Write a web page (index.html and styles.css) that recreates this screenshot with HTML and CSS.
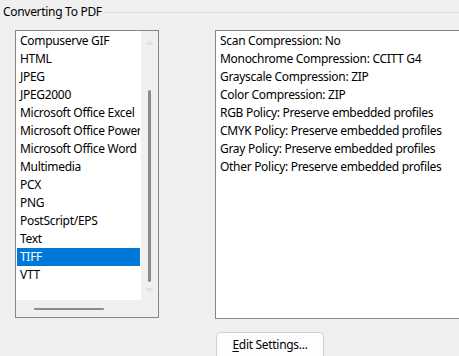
FILE: index.html
```html
<!DOCTYPE html>
<html>
<head>
<meta charset="utf-8">
<link rel="stylesheet" href="styles.css">
</head>
<body>
<div class="group">
  <div class="legend">
    <span class="legend-text">Converting To PDF</span>
    <span class="legend-line"></span>
  </div>
  <div class="content">
    <div class="listbox">
      <div class="lb-main">
        <div class="lb-items">
          <div class="item">Compuserve GIF</div>
          <div class="item">HTML</div>
          <div class="item">JPEG</div>
          <div class="item">JPEG2000</div>
          <div class="item">Microsoft Office Excel</div>
          <div class="item">Microsoft Office PowerPoint</div>
          <div class="item">Microsoft Office Word</div>
          <div class="item">Multimedia</div>
          <div class="item">PCX</div>
          <div class="item">PNG</div>
          <div class="item">PostScript/EPS</div>
          <div class="item">Text</div>
          <div class="item selected">TIFF</div>
          <div class="item">VTT</div>
        </div>
        <div class="vscroll">
          <svg class="arrow up" width="9" height="6" viewBox="0 0 9 6"><path d="M0 6 L4.5 1 L9 6 Z" fill="#e2e2e2"/></svg>
          <div class="vthumb"></div>
          <svg class="arrow down" width="9" height="6" viewBox="0 0 9 6"><path d="M0 0 L4.5 5 L9 0 Z" fill="#e2e2e2"/></svg>
        </div>
      </div>
      <div class="lb-bottom">
        <div class="hscroll"><div class="hthumb"></div></div>
        <div class="corner"></div>
      </div>
    </div>
    <div class="details">
      <div class="line">Scan Compression: No</div>
      <div class="line">Monochrome Compression: CCITT G4</div>
      <div class="line">Grayscale Compression: ZIP</div>
      <div class="line">Color Compression: ZIP</div>
      <div class="line">RGB Policy: Preserve embedded profiles</div>
      <div class="line">CMYK Policy: Preserve embedded profiles</div>
      <div class="line">Gray Policy: Preserve embedded profiles</div>
      <div class="line">Other Policy: Preserve embedded profiles</div>
    </div>
  </div>
  <div class="actions">
    <button class="btn"><u>E</u>dit Settings...</button>
  </div>
</div>
</body>
</html>
```
FILE: styles.css
```css
html, body {
  margin: 0;
  padding: 0;
  background: #f0f0f0;
  width: 459px;
  height: 356px;
  overflow: hidden;
}
body {
  font-family: "Noto Sans", "Open Sans", sans-serif;
  font-size: 12px;
  letter-spacing: -0.3px;
  color: #000;
}
.group {
  padding-top: 3px;
}
.legend {
  display: flex;
  align-items: center;
  height: 17px;
}
.legend-text {
  padding-left: 3px;
  padding-right: 3px;
  white-space: nowrap;
}
.legend-line {
  flex: 1;
  height: 0;
  border-top: 1px solid #dcdcdc;
  margin-top: 1px;
}
.content {
  display: flex;
  margin-top: 10px;
  padding-left: 15px;
  gap: 56px;
}
.listbox {
  width: 142px;
  height: 286px;
  border: 1px solid #828790;
  display: flex;
  flex-direction: column;
  background: #f0f0f0;
  flex: none;
}
.lb-main {
  display: flex;
  flex: 1;
  min-height: 0;
}
.lb-items {
  width: 124px;
  background: #fff;
  padding: 1px 0 0 1px;
  overflow: hidden;
}
.item {
  height: 18px;
  line-height: 18px;
  padding-left: 3px;
  white-space: nowrap;
  overflow: hidden;
  width: 120px;
}
.item.selected {
  background: #0078d7;
  color: #fff;
}
.vscroll {
  width: 17px;
  background: #f0f0f0;
  display: flex;
  flex-direction: column;
  align-items: center;
}
.arrow {
  display: block;
}
.arrow.up {
  margin-top: 8px;
}
.vthumb {
  width: 3px;
  border-radius: 2px;
  background: #8b8b8b;
  margin-top: 45px;
  height: 192px;
}
.arrow.down {
  margin-top: 6px;
}
.lb-bottom {
  display: flex;
  height: 17px;
  flex: none;
}
.hscroll {
  width: 125px;
  display: flex;
  align-items: center;
  padding-left: 18px;
  box-sizing: border-box;
}
.hthumb {
  width: 70px;
  height: 2px;
  border-radius: 1px;
  background: #8b8b8b;
}
.corner {
  width: 17px;
}
.details {
  flex: 1;
  height: 286px;
  border: 1px solid #828790;
  border-right: none;
  background: #fff;
  padding: 1px 0 0 4px;
}
.line {
  height: 18px;
  line-height: 18px;
  white-space: nowrap;
}
.actions {
  padding-left: 216px;
  margin-top: 13px;
}
.btn {
  width: 108px;
  height: 28px;
  border: 1px solid #d0d0d0;
  border-radius: 4px;
  background: #fdfdfd;
  font-family: inherit;
  font-size: 12px;
  letter-spacing: -0.3px;
  color: #000;
  padding: 0 0 3px 0;
  margin: 0;
}
.btn u {
  text-underline-offset: 2px;
}
```
